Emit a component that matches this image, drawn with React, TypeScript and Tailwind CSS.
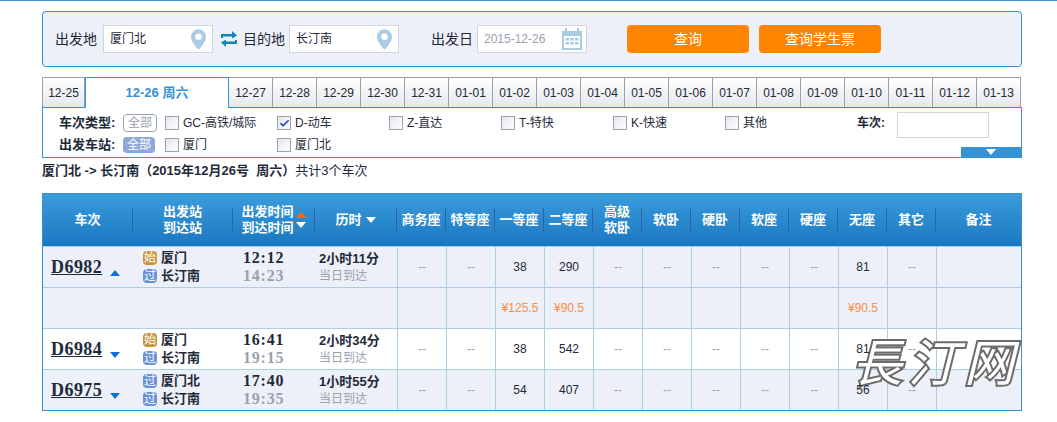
import React from "react";
import { Check } from "lucide-react";

const dates = ["12-27","12-28","12-29","12-30","12-31","01-01","01-02","01-03","01-04","01-05","01-06","01-07","01-08","01-09","01-10","01-11","01-12","01-13"];
const cols = "grid grid-cols-[90px_100px_82px_82px_repeat(11,49px)_1fr]";

const trains = [
  { no: "D6982", open: true, white: false, from: "厦门", fromTag: "始", to: "长汀南", dep: "12:12", arr: "14:23", dur: "2小时11分", seats: ["--","--","38","290","--","--","--","--","--","81","--",""] },
  { no: "D6984", open: false, white: true, from: "厦门", fromTag: "始", to: "长汀南", dep: "16:41", arr: "19:15", dur: "2小时34分", seats: ["--","--","38","542","--","--","--","--","--","81","--",""] },
  { no: "D6975", open: false, white: false, from: "厦门北", fromTag: "过", to: "长汀南", dep: "17:40", arr: "19:35", dur: "1小时55分", seats: ["--","--","54","407","--","--","--","--","--","56","--",""] },
];
const prices = ["","","¥125.5","¥90.5","","","","","","¥90.5","",""];
const seatHeads = ["商务座","特等座","一等座","二等座","高级软卧","软卧","硬卧","软座","硬座","无座","其它","备注"];

function Pin() {
  return (
    <svg width="15" height="21" viewBox="0 0 16 22">
      <path fillRule="evenodd" fill="#a9cbe6" d="M8 0a8 8 0 0 1 8 8c0 4.500-4 9.500-8 14C4 17.500 0 12.500 0 8a8 8 0 0 1 8-8zm0 4.500a3.500 3.500 0 1 0 0 7 3.500 3.500 0 0 0 0-7z" />
    </svg>
  );
}

function Calendar() {
  return (
    <svg width="20" height="22" viewBox="0 0 20 22" fill="#a9cbe6">
      <path fillRule="evenodd" d="M0 3h3V0h2v3h10V0h2v3h3v19H0zM2 8v12h16V8z" />
      <path d="M3.500 10h3.500v2.500H3.500zM8.200 10h3.500v2.500H8.200zM13 10h3.500v2.500H13zM3.500 14h3.500v2.500H3.500zM8.200 14h3.500v2.500H8.200zM13 14h3.500v2.500H13z" />
    </svg>
  );
}

function Swap() {
  return (
    <svg width="16" height="16" viewBox="0 0 16 16" fill="#0f86b8">
      <path d="M0 7V3h11V0l5 4.500L11 7.500V5.500H2V7z" />
      <path d="M16 9v4H5v3L0 11.500 5 8.500v2h9V9z" />
    </svg>
  );
}

function Box({ checked }: { checked?: boolean }) {
  return (
    <span className="flex h-3.5 w-3.5 shrink-0 items-center justify-center border border-gray-400 bg-gradient-to-br from-gray-200 to-white">
      {checked && <Check size={11} strokeWidth={3.5} className="text-blue-800" />}
    </span>
  );
}

function Opt({ label, checked, w }: { label: string; checked?: boolean; w: string }) {
  return (
    <label className={`flex items-center gap-1 ${w}`}>
      <Box checked={checked} />
      <span>{label}</span>
    </label>
  );
}

function Tag({ text }: { text: string }) {
  const color = text === "始" ? "bg-[#c8963e]" : "bg-[#6a93d6]";
  return <span className={`flex h-3.5 w-3.5 items-center justify-center rounded-sm text-xs leading-none font-normal text-white ${color}`}>{text}</span>;
}

function Tri({ up, className }: { up?: boolean; className: string }) {
  return (
    <svg width="10" height="6" viewBox="0 0 10 6" className={className} fill="currentColor">
      <path d={up ? "M5 0l5 6H0z" : "M0 0h10L5 6z"} />
    </svg>
  );
}

function HeadCell({ children, sep = true }: { children: React.ReactNode; sep?: boolean }) {
  return (
    <div className="flex items-center justify-center">
      <div className="flex h-6 w-full items-center justify-center text-center leading-4">{children}</div>
      {sep && <span className="h-6 w-px shrink-0 bg-[#2f62a3]" />}
    </div>
  );
}

export default function App() {
  return (
    <div className="h-[422px] overflow-hidden border-t border-[#3592d4] bg-white pl-[42px] font-['Liberation_Sans','Noto_Sans_CJK_SC',sans-serif] text-[13px] text-gray-800">
      <div className="relative w-[980px]">
        <div className="mt-2.5 flex h-14 items-center rounded-sm border border-[#3592d4] bg-[#edf0f8] pl-3 text-sm">
          <span className="mr-1.5">出发地</span>
          <div className="flex h-7 w-[110px] items-center justify-between border border-gray-300 bg-white pr-1.5 pl-1.5 text-xs">
            <span>厦门北</span>
            <Pin />
          </div>
          <span className="mr-1.5 ml-2"><Swap /></span>
          <span className="mr-1">目的地</span>
          <div className="flex h-7 w-[110px] items-center justify-between border border-gray-300 bg-white pr-1.5 pl-1.5 text-xs">
            <span>长汀南</span>
            <Pin />
          </div>
          <span className="mr-1 ml-8">出发日</span>
          <div className="flex h-7 w-[110px] items-center justify-between border border-gray-300 bg-white pr-1 pl-1.5 text-xs text-gray-400">
            <span>2015-12-26</span>
            <Calendar />
          </div>
          <button className="ml-10 h-7 w-[122px] rounded-sm bg-[#ff8400] text-sm text-white">查询</button>
          <button className="ml-2.5 h-7 w-[122px] rounded-sm bg-[#ff8400] text-sm text-white">查询学生票</button>
        </div>

        <div className="mt-2.5 flex h-[30px] text-xs">
          <div className="flex w-[43px] items-center justify-center border-t border-r border-l border-gray-400 bg-gradient-to-b from-white to-gray-200">12-25</div>
          <div className="relative z-10 flex h-[31px] w-36 items-center justify-center border-x border-t border-[#3592d4] bg-white text-[13px] font-bold text-[#3592d4]">12-26 周六</div>
          {dates.map((d) => (
            <div key={d} className="flex w-11 items-center justify-center border-t border-r border-gray-400 bg-gradient-to-b from-white to-gray-200">{d}</div>
          ))}
        </div>
        <div className="relative h-[51px] border border-[#3592d4] text-xs">
          <div className="flex h-6 items-center pt-1.5 pl-4">
            <span className="w-16 text-[13px] font-bold">车次类型:</span>
            <span className="mr-2 rounded border border-gray-400 px-1 text-gray-400">全部</span>
            <Opt label="GC-高铁/城际" w="w-28" />
            <Opt label="D-动车" checked w="w-28" />
            <Opt label="Z-直达" w="w-28" />
            <Opt label="T-特快" w="w-28" />
            <Opt label="K-快速" w="w-28" />
            <Opt label="其他" w="w-33" />
            <span className="w-10 font-bold">车次:</span>
            <span className="mt-1 h-6.5 w-[92px] border border-gray-300" />
          </div>
          <div className="mt-px flex h-6 items-center pl-4">
            <span className="w-16 text-[13px] font-bold">出发车站:</span>
            <span className="mr-2.5 rounded bg-[#8fa8d8] px-1 text-white">全部</span>
            <Opt label="厦门" w="w-28" />
            <Opt label="厦门北" w="w-28" />
          </div>
          <div className="absolute right-0 bottom-0 flex h-2.5 w-[60px] items-center justify-center bg-[#3592d4]">
            <Tri className="text-white" />
          </div>
        </div>

        <div className="mt-0.75 text-[13px] leading-5 whitespace-pre">
          <span className="font-bold">厦门北 -&gt; 长汀南（2015年12月26号  周六）</span>
          <span>共计3个车次</span>
        </div>

        <div className="mt-3 border border-[#3592d4]">
          <div className={`${cols} h-[52px] bg-gradient-to-b from-[#3a9bdc] to-[#1a78c2] text-[13px] font-bold text-white`}>
            <HeadCell>车次</HeadCell>
            <HeadCell><span>出发站<br />到达站</span></HeadCell>
            <HeadCell>
              <span className="flex items-center gap-0.5">
                <span>出发时间<br />到达时间</span>
                <span className="flex flex-col gap-1"><Tri up className="text-orange-500" /><Tri className="text-white" /></span>
              </span>
            </HeadCell>
            <HeadCell><span className="flex items-center gap-1">历时<Tri className="text-white" /></span></HeadCell>
            {seatHeads.map((h, i) => (
              <HeadCell key={h} sep={i < seatHeads.length - 1}>
                {h === "高级软卧" ? <span>高级<br />软卧</span> : h}
              </HeadCell>
            ))}
          </div>

          {trains.map((t, idx) => (
            <React.Fragment key={t.no}>
              <div className={`${cols} h-[41px] border-t border-[#a9cfe0] ${t.white ? "bg-white" : "bg-[#edf0f8]"}`}>
                <div className="flex items-center pl-2">
                  <span className="font-['Liberation_Serif','Noto_Sans_CJK_SC',serif] text-lg font-bold tracking-wide underline">{t.no}</span>
                  <Tri up={t.open} className="mt-3 ml-2 text-[#0f6fd8]" />
                </div>
                <div className="flex flex-col justify-center gap-1 pl-2.5 leading-3.5 font-bold">
                  <div className="flex items-center gap-1"><Tag text={t.fromTag} />{t.from}</div>
                  <div className="flex items-center gap-1"><Tag text="过" />{t.to}</div>
                </div>
                <div className="flex flex-col justify-center pl-2.5 font-['Liberation_Serif','Noto_Sans_CJK_SC',serif] text-base leading-[18px] font-bold tracking-wider">
                  <span>{t.dep}</span>
                  <span className="text-gray-400">{t.arr}</span>
                </div>
                <div className="flex flex-col justify-center pl-1 leading-[18px]">
                  <span className="font-bold">{t.dur}</span>
                  <span className="text-xs text-gray-400">当日到达</span>
                </div>
                {t.seats.map((s, i) => (
                  <div key={i} className={`flex items-center justify-center border-l border-[#a9cfe0] text-xs ${s === "--" ? "text-gray-400" : ""}`}>
                    <span className="relative z-10">{s}</span>
                  </div>
                ))}
              </div>
              {idx === 0 && (
                <div className={`${cols} h-[41px] border-t border-[#a9cfe0] bg-[#edf0f8] text-xs text-[#ff8a3c]`}>
                  <div className="col-span-4" />
                  {prices.map((p, i) => (
                    <div key={i} className="flex items-center justify-center border-l border-[#a9cfe0]">{p}</div>
                  ))}
                </div>
              )}
            </React.Fragment>
          ))}
        </div>

        <svg width="172" height="64" viewBox="0 0 172 64" className="absolute top-[320px] left-[808px]">
          <text x="2" y="50" fontSize="50" fontStyle="italic" fontFamily="'Noto Sans CJK TC', sans-serif" fill="white" stroke="#6b6b6b" strokeWidth="4" paintOrder="stroke" textLength="162">長汀网</text>
        </svg>
      </div>
    </div>
  );
}
